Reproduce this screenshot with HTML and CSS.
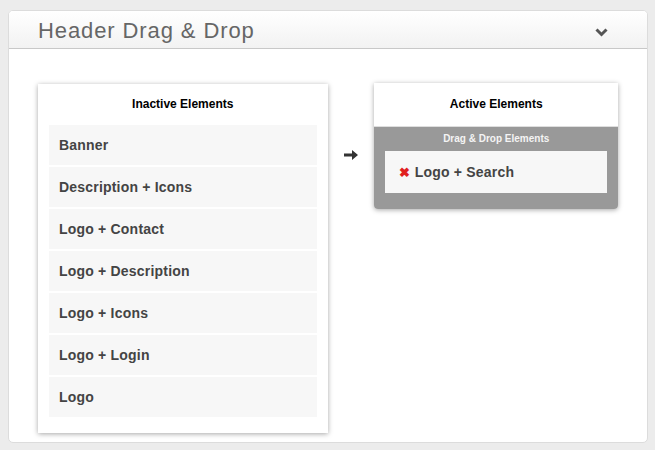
FILE: index.html
```html
<!DOCTYPE html>
<html lang="en">
<head>
    <meta charset="UTF-8">
    <title>Header Drag &amp; Drop</title>
    <link rel="stylesheet" href="styles.css">
</head>
<body>
    <div class="panel">
        <div class="panel-heading">
            <h3>Header Drag &amp; Drop</h3>
            <svg class="chevron" width="13" height="9" viewBox="0 0 13 9">
                <path d="M1.5 1.5 L6.5 6.5 L11.5 1.5" fill="none" stroke="#555" stroke-width="3"/>
            </svg>
        </div>
        <div class="panel-body">
            <div class="box inactive">
                <h4>Inactive Elements</h4>
                <ul class="items">
                    <li>Banner</li>
                    <li>Description + Icons</li>
                    <li>Logo + Contact</li>
                    <li>Logo + Description</li>
                    <li>Logo + Icons</li>
                    <li>Logo + Login</li>
                    <li>Logo</li>
                </ul>
            </div>
            <div class="arrow">
                <svg width="14" height="10" viewBox="0 0 14 10">
                    <path d="M0 3.5 H8 V0 L14 5 L8 10 V6.5 H0 Z" fill="#333"/>
                </svg>
            </div>
            <div class="box active">
                <h4>Active Elements</h4>
                <div class="drop-zone">
                    <div class="drop-label">Drag &amp; Drop Elements</div>
                    <div class="drop-item"><span class="remove">&#x2716;</span> Logo + Search</div>
                </div>
            </div>
        </div>
    </div>
</body>
</html>
```

FILE: styles.css
```css
body {
    margin: 0;
    padding: 10px 7px 7px 8px;
    background-color: #ececec;
    font-family: "Liberation Sans", Arial, sans-serif;
}
.panel {
    width: 638px;
    height: 431px;
    background-color: white;
    border: 1px solid #dcdcdc;
    border-radius: 5px;
    overflow: hidden;
}
.panel-heading {
    height: 37px;
    display: flex;
    align-items: center;
    justify-content: space-between;
    padding: 0 39px 0 29px;
    background: linear-gradient(to bottom, #ffffff, #f2f2f2);
    border-bottom: 1px solid #c8c8c8;
}
.panel-heading h3 {
    margin: 0;
    font-size: 22px;
    font-weight: normal;
    letter-spacing: 0.9px;
    color: #666;
    padding-top: 3px;
}
.chevron {
    margin-top: 6px;
}
.panel-body {
    display: flex;
    align-items: flex-start;
    padding: 35px 29px 0 29px;
}
.box {
    background-color: white;
    box-shadow: 0 1px 5px rgba(0, 0, 0, 0.35);
}
.box h4 {
    margin: 0;
    font-size: 12px;
    font-weight: bold;
    color: #000;
    text-align: center;
}
.inactive {
    width: 268px;
    padding: 0 11px 16px 11px;
}
.inactive h4 {
    padding: 13px 0 14px 0;
}
.items {
    list-style: none;
    margin: 0;
    padding: 0;
    display: flex;
    flex-direction: column;
    gap: 2px;
}
.items li {
    height: 40px;
    line-height: 40px;
    padding-left: 10px;
    background-color: #f7f7f7;
    font-size: 14px;
    font-weight: bold;
    letter-spacing: 0.2px;
    color: #444;
}
.arrow {
    width: 47px;
    display: flex;
    justify-content: center;
    padding-top: 66px;
}
.active {
    width: 244px;
    margin-top: -1px;
    border-radius: 0 0 4px 4px;
    overflow: hidden;
}
.active h4 {
    height: 43px;
    line-height: 43px;
    border-bottom: 1px solid #dedede;
}
.drop-zone {
    background-color: #999;
    padding: 0 11px 16px 11px;
}
.drop-label {
    color: #f4f4f4;
    font-size: 10px;
    font-weight: bold;
    text-align: center;
    padding: 6px 0 7px 0;
}
.drop-item {
    height: 42px;
    line-height: 42px;
    padding-left: 14px;
    background-color: #f7f7f7;
    font-size: 14px;
    font-weight: bold;
    letter-spacing: 0.2px;
    color: #444;
}
.remove {
    color: #e0201f;
    font-size: 13px;
}
```
